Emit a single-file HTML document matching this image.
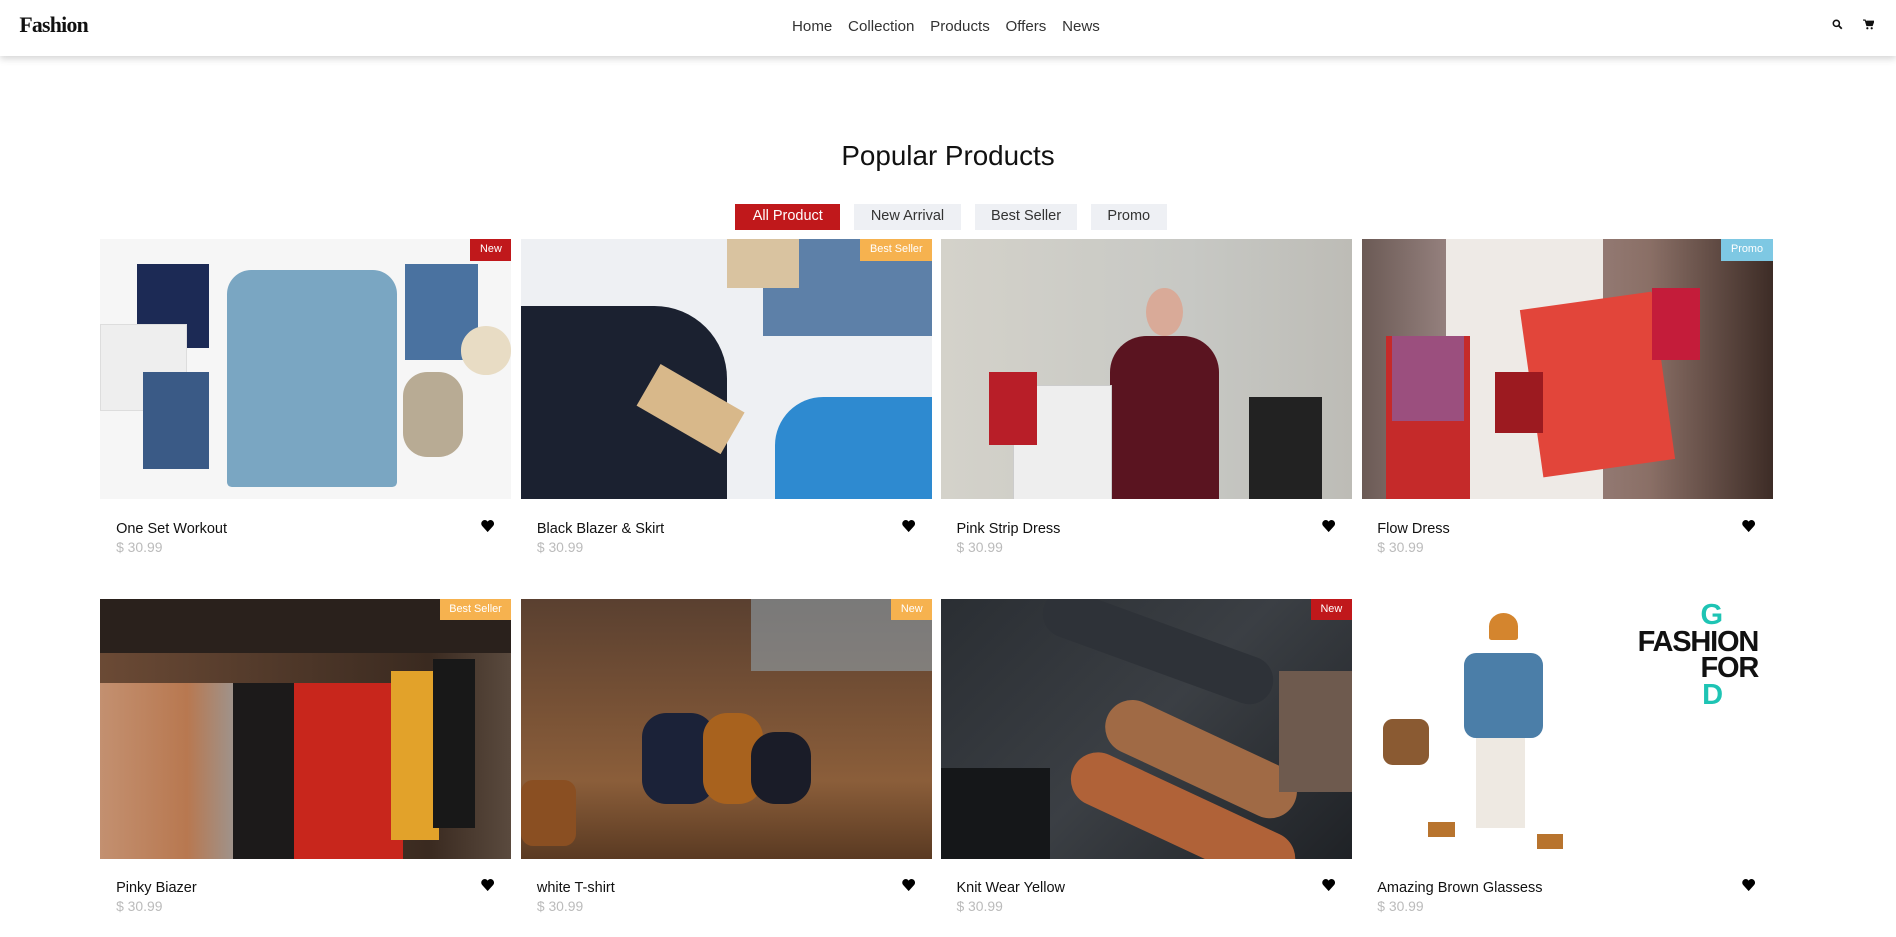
<!DOCTYPE html>
<html><head><meta charset="utf-8"><style>
html,body{margin:0;padding:0;background:#fff;overflow:hidden}
body{zoom:1.2092;width:1568px;height:775px;position:relative;font-family:"Liberation Sans",sans-serif;color:#111}
.hdr{position:absolute;left:0;top:0;width:1568px;height:46px;background:#fff;box-shadow:0 2px 6px rgba(0,0,0,.18)}
.logo{position:absolute;left:16px;top:11px;font-family:"Liberation Serif",serif;font-weight:bold;font-size:18px;letter-spacing:-.6px}
.nav{position:absolute;left:655px;top:15px;font-size:12.5px;color:#333}
.nav span{margin-right:13px}
.title{position:absolute;left:0;width:1568px;top:116px;text-align:center;font-size:23px;color:#111}
.btn{position:absolute;top:169px;height:21px;line-height:21px;font-size:12px;text-align:center;background:#eef0f4;color:#333}
.card{position:absolute;width:340px}
.img{width:340px;height:215px;position:relative;overflow:hidden}
.badge{position:absolute;right:0;top:0;height:18px;line-height:18px;padding:0 8px;font-size:9px;color:#fff}
.nm{position:absolute;left:13px;top:233px;font-size:12px;color:#111}
.pr{position:absolute;left:13px;top:248px;font-size:11.5px;color:#bbb}
.hrt{position:absolute;right:14px;top:232px}
.r{background:#c0181b}.o{background:#f6b24f}.b{background:#7ec8e3}
</style></head><body>
<div class="hdr"><div class="logo">Fashion</div>
<div class="nav"><span>Home</span><span>Collection</span><span>Products</span><span>Offers</span><span>News</span></div>
<svg style="position:absolute;left:1515px;top:16px" width="9" height="9" viewBox="0 0 10 10"><circle cx="4" cy="4" r="2.8" fill="none" stroke="#111" stroke-width="1.4"/><path d="M6 6L9 9" stroke="#111" stroke-width="1.6"/></svg>
<svg style="position:absolute;left:1541px;top:16px" width="9" height="9" viewBox="0 0 10 10"><path d="M0 1h2l1.5 5h5L10 2H3" fill="#111" stroke="#111"/><circle cx="4" cy="8.5" r="1" fill="#111"/><circle cx="8" cy="8.5" r="1" fill="#111"/></svg>
</div>
<div class="title">Popular Products</div>
<div class="btn" style="left:608px;width:87px;background:#c0181b;color:#fff">All Product</div>
<div class="btn" style="left:706px;width:89px">New Arrival</div>
<div class="btn" style="left:806px;width:85px">Best Seller</div>
<div class="btn" style="left:902px;width:63px">Promo</div>

<div class="card" style="left:83px;top:198px"><div class="img" style="background:#f6f6f6">
<div style="position:absolute;left:30px;top:20px;width:60px;height:70px;background:#1c2a55"></div>
<div style="position:absolute;left:0;top:70px;width:70px;height:70px;background:#eee;border:1px solid #ddd"></div>
<div style="position:absolute;left:35px;top:110px;width:55px;height:80px;background:#3a5a86"></div>
<div style="position:absolute;left:105px;top:25px;width:140px;height:180px;background:#7aa6c2;border-radius:20px 20px 4px 4px"></div>
<div style="position:absolute;left:252px;top:20px;width:60px;height:80px;background:#4a72a0"></div>
<div style="position:absolute;left:298px;top:72px;width:42px;height:40px;background:#e8dcc4;border-radius:50%"></div>
<div style="position:absolute;left:250px;top:110px;width:50px;height:70px;background:#b8ab94;border-radius:20px"></div>
<span class="badge r">New</span></div>
<div class="nm">One Set Workout</div><div class="pr">$ 30.99</div><svg class="hrt" width="11" height="10" viewBox="0 0 12 11"><path d="M6 11L1 5.5C-1 3 1 0 3.5 0 5 0 6 1.5 6 1.5S7 0 8.5 0C11 0 13 3 11 5.5Z"/></svg></div>

<div class="card" style="left:431px;top:198px"><div class="img" style="background:#eef0f3">
<div style="position:absolute;left:0;top:55px;width:170px;height:160px;background:#1b2130;border-radius:0 60px 0 0"></div>
<div style="position:absolute;left:200px;top:0;width:140px;height:80px;background:#5d80a8"></div>
<div style="position:absolute;left:210px;top:130px;width:130px;height:85px;background:#2e8ad0;border-radius:40px 0 0 0"></div>
<div style="position:absolute;left:100px;top:120px;width:80px;height:40px;background:#d8b88a;transform:rotate(30deg)"></div>
<div style="position:absolute;left:170px;top:0;width:60px;height:40px;background:#d9c3a0"></div>
<span class="badge o">Best Seller</span></div>
<div class="nm">Black Blazer &amp; Skirt</div><div class="pr">$ 30.99</div><svg class="hrt" width="11" height="10" viewBox="0 0 12 11"><path d="M6 11L1 5.5C-1 3 1 0 3.5 0 5 0 6 1.5 6 1.5S7 0 8.5 0C11 0 13 3 11 5.5Z"/></svg></div>

<div class="card" style="left:778px;top:198px"><div class="img" style="background:linear-gradient(90deg,#d4d2ca,#c7c8c4 60%,#bdbcb6)">
<div style="position:absolute;left:140px;top:80px;width:90px;height:135px;background:#5a1420;border-radius:30px 30px 0 0"></div>
<div style="position:absolute;left:170px;top:40px;width:30px;height:40px;background:#d9aa98;border-radius:50%"></div>
<div style="position:absolute;left:60px;top:120px;width:80px;height:95px;background:#eee;border:1px solid #ccc"></div>
<div style="position:absolute;left:40px;top:110px;width:40px;height:60px;background:#b81e28"></div>
<div style="position:absolute;left:255px;top:130px;width:60px;height:85px;background:#222"></div>
</div>
<div class="nm">Pink Strip Dress</div><div class="pr">$ 30.99</div><svg class="hrt" width="11" height="10" viewBox="0 0 12 11"><path d="M6 11L1 5.5C-1 3 1 0 3.5 0 5 0 6 1.5 6 1.5S7 0 8.5 0C11 0 13 3 11 5.5Z"/></svg></div>

<div class="card" style="left:1126px;top:198px"><div class="img" style="background:linear-gradient(90deg,#6b5a55,#a89290 30%,#8a6f66 70%,#3d2c26)">
<div style="position:absolute;left:70px;top:0;width:130px;height:215px;background:#eeeae6"></div>
<div style="position:absolute;left:140px;top:50px;width:110px;height:140px;background:#e2453a;transform:rotate(-8deg)"></div>
<div style="position:absolute;left:20px;top:80px;width:70px;height:135px;background:#c52a2a"></div>
<div style="position:absolute;left:25px;top:80px;width:60px;height:70px;background:#9b4f7e"></div>
<div style="position:absolute;left:240px;top:40px;width:40px;height:60px;background:#c41c3a"></div>
<div style="position:absolute;left:110px;top:110px;width:40px;height:50px;background:#9c1a20"></div>
<span class="badge b">Promo</span></div>
<div class="nm">Flow Dress</div><div class="pr">$ 30.99</div><svg class="hrt" width="11" height="10" viewBox="0 0 12 11"><path d="M6 11L1 5.5C-1 3 1 0 3.5 0 5 0 6 1.5 6 1.5S7 0 8.5 0C11 0 13 3 11 5.5Z"/></svg></div>

<div class="card" style="left:83px;top:495px"><div class="img" style="background:linear-gradient(90deg,#6b4a35,#3a2a20 80%,#5a4a3e)">
<div style="position:absolute;left:0;top:0;width:340px;height:45px;background:#2a211c"></div>
<div style="position:absolute;left:0;top:70px;width:120px;height:145px;background:linear-gradient(90deg,#c39070,#b87850 60%,#999)"></div>
<div style="position:absolute;left:110px;top:70px;width:60px;height:145px;background:#1c1a1a"></div>
<div style="position:absolute;left:160px;top:70px;width:90px;height:145px;background:#c8261c"></div>
<div style="position:absolute;left:240px;top:60px;width:40px;height:140px;background:#e2a22a"></div>
<div style="position:absolute;left:275px;top:50px;width:35px;height:140px;background:#181818"></div>
<span class="badge o">Best Seller</span></div>
<div class="nm">Pinky Biazer</div><div class="pr">$ 30.99</div><svg class="hrt" width="11" height="10" viewBox="0 0 12 11"><path d="M6 11L1 5.5C-1 3 1 0 3.5 0 5 0 6 1.5 6 1.5S7 0 8.5 0C11 0 13 3 11 5.5Z"/></svg></div>

<div class="card" style="left:431px;top:495px"><div class="img" style="background:linear-gradient(180deg,#5a4030,#7a5336 45%,#8b5e3a 70%,#5a3a22)">
<div style="position:absolute;left:190px;top:0;width:150px;height:60px;background:#8fa0aa;opacity:.6"></div>
<div style="position:absolute;left:100px;top:95px;width:60px;height:75px;background:#1b2238;border-radius:20px"></div>
<div style="position:absolute;left:150px;top:95px;width:50px;height:75px;background:#a8621e;border-radius:20px"></div>
<div style="position:absolute;left:190px;top:110px;width:50px;height:60px;background:#1a1c28;border-radius:20px"></div>
<div style="position:absolute;left:0;top:150px;width:45px;height:55px;background:#8a4f22;border-radius:10px"></div>
<span class="badge o">New</span></div>
<div class="nm">white T-shirt</div><div class="pr">$ 30.99</div><svg class="hrt" width="11" height="10" viewBox="0 0 12 11"><path d="M6 11L1 5.5C-1 3 1 0 3.5 0 5 0 6 1.5 6 1.5S7 0 8.5 0C11 0 13 3 11 5.5Z"/></svg></div>

<div class="card" style="left:778px;top:495px"><div class="img" style="background:linear-gradient(135deg,#2a2e33,#3b3f44 50%,#1f2226)">
<div style="position:absolute;left:80px;top:20px;width:200px;height:40px;background:#2e3238;border-radius:20px;transform:rotate(20deg)"></div>
<div style="position:absolute;left:130px;top:110px;width:170px;height:45px;background:#a06a45;border-radius:25px;transform:rotate(25deg)"></div>
<div style="position:absolute;left:100px;top:160px;width:200px;height:45px;background:#b06238;border-radius:25px;transform:rotate(25deg)"></div>
<div style="position:absolute;left:0;top:140px;width:90px;height:75px;background:#151719"></div>
<div style="position:absolute;left:280px;top:60px;width:60px;height:100px;background:#6e5a4e"></div>
<span class="badge r">New</span></div>
<div class="nm">Knit Wear Yellow</div><div class="pr">$ 30.99</div><svg class="hrt" width="11" height="10" viewBox="0 0 12 11"><path d="M6 11L1 5.5C-1 3 1 0 3.5 0 5 0 6 1.5 6 1.5S7 0 8.5 0C11 0 13 3 11 5.5Z"/></svg></div>

<div class="card" style="left:1126px;top:495px"><div class="img" style="background:#fff">
<div style="position:absolute;left:105px;top:12px;width:24px;height:22px;background:#d4852e;border-radius:50% 50% 2px 2px"></div>
<div style="position:absolute;left:85px;top:45px;width:65px;height:70px;background:#4b7ea8;border-radius:10px"></div>
<div style="position:absolute;left:95px;top:115px;width:40px;height:75px;background:#eee9e2"></div>
<div style="position:absolute;left:18px;top:100px;width:38px;height:38px;background:#8a5a32;border-radius:8px"></div>
<div style="position:absolute;left:55px;top:185px;width:22px;height:12px;background:#b8742e"></div>
<div style="position:absolute;left:145px;top:195px;width:22px;height:12px;background:#b8742e"></div>
<div style="position:absolute;left:208px;top:3px;font-weight:bold;font-size:24px;line-height:22px;color:#111;letter-spacing:-1px;text-align:right;width:120px">
<div style="color:#1ec4b4;text-align:right;padding-right:30px">G</div>FASHION<br>FOR<div style="color:#1ec4b4;padding-right:30px">D</div></div>
</div>
<div class="nm">Amazing Brown Glassess</div><div class="pr">$ 30.99</div><svg class="hrt" width="11" height="10" viewBox="0 0 12 11"><path d="M6 11L1 5.5C-1 3 1 0 3.5 0 5 0 6 1.5 6 1.5S7 0 8.5 0C11 0 13 3 11 5.5Z"/></svg></div>
</body></html>
